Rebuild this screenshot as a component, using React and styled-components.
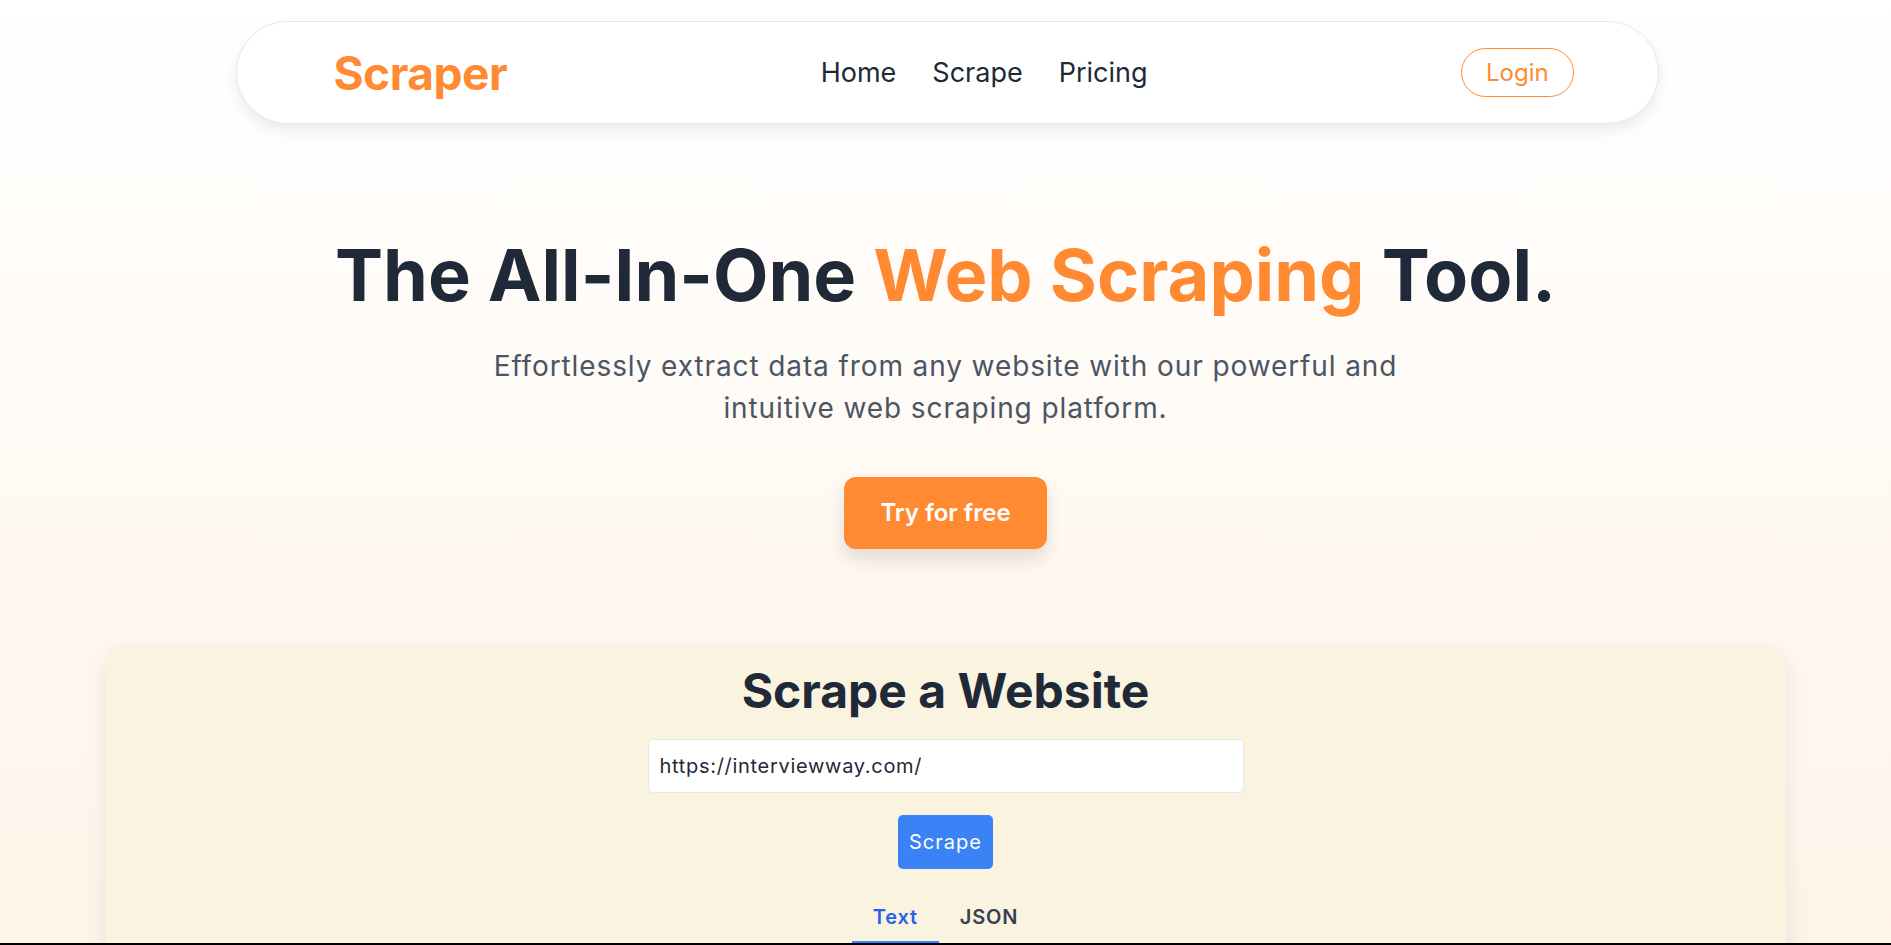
import React, { useState } from 'react';
import styled, { createGlobalStyle } from 'styled-components';

const GlobalStyle = createGlobalStyle`
    html, body {
        margin: 0;
        padding: 0;
    }
    body {
        font-family: Inter, 'Noto Sans', sans-serif;
        color: #1f2937;
        background: #fff;
    }
    * { box-sizing: border-box; }
`;

const Page = styled.div`
    min-height: 100vh;
    background: linear-gradient(to bottom, #ffffff 0%, #fff8f1 60%, #fff3e8 100%);
    padding-top: 21px;
    display: flex;
    flex-direction: column;
    align-items: center;
`;

const Navbar = styled.nav`
    width: calc(75% + 4px);
    margin-left: 4px;
    height: 103px;
    background: #fff;
    border: 1px solid #e5e7eb;
    border-radius: 52px;
    box-shadow: 0 6px 14px rgba(0, 0, 0, 0.08);
    display: flex;
    align-items: center;
    justify-content: space-between;
    padding: 0 84px 0 96px;
`;

const Logo = styled.a`
    font-size: 46px;
    font-weight: 700;
    color: #ff8a32;
    text-decoration: none;
    letter-spacing: -0.01em;
`;

const NavLinks = styled.div`
    display: flex;
    gap: 36px;
    margin-top: -1px;
`;

const NavLink = styled.a`
    font-size: 27px;
    color: #1f2937;
    text-decoration: none;
`;

const LoginButton = styled.button`
    font-family: inherit;
    font-size: 24px;
    line-height: 32px;
    color: #ff8a32;
    background: transparent;
    border: 1px solid #ff8a32;
    border-radius: 999px;
    padding: 7.5px 24px;
    cursor: pointer;
`;

const Hero = styled.section`
    display: flex;
    flex-direction: column;
    align-items: center;
    text-align: center;
    margin-top: 115px;
`;

const Title = styled.h1`
    margin: 0;
    font-size: 72px;
    line-height: 72px;
    font-weight: 700;
    color: #1f2937;
`;

const Accent = styled.span`
    color: #ff8a32;
`;

const Subtitle = styled.p`
    margin: 34px 0 0;
    max-width: 960px;
    font-size: 28px;
    line-height: 42px;
    letter-spacing: 0.032em;
    color: #4b5563;
`;

const CtaButton = styled.button`
    margin-top: 48px;
    font-family: inherit;
    font-size: 24px;
    line-height: 32px;
    font-weight: 600;
    color: #fff;
    background: #ff8a32;
    border: none;
    border-radius: 12px;
    padding: 20px 36px;
    box-shadow: 0 10px 18px rgba(0, 0, 0, 0.12);
    cursor: pointer;
`;

const Card = styled.section`
    width: 1680px;
    margin-top: 96px;
    background: #faf3df;
    border-radius: 16px;
    box-shadow: 0 10px 25px rgba(0, 0, 0, 0.08);
    padding: 16px 24px 40px;
    display: flex;
    flex-direction: column;
    align-items: center;
`;

const CardTitle = styled.h2`
    margin: 0;
    font-size: 48px;
    line-height: 60px;
    font-weight: 700;
    color: #1f2937;
`;

const UrlInput = styled.input`
    margin-top: 18px;
    width: 596px;
    height: 54px;
    font-family: inherit;
    font-size: 20px;
    letter-spacing: 0.035em;
    color: #1f2937;
    background: #fff;
    border: 1px solid #e5e7eb;
    border-radius: 5px;
    padding: 0 11px;
    outline: none;
`;

const ScrapeButton = styled.button`
    margin-top: 22px;
    height: 54px;
    font-family: inherit;
    font-size: 20px;
    line-height: 28px;
    letter-spacing: 0.05em;
    color: #fff;
    background: #3b82f6;
    border: none;
    border-radius: 5px;
    padding: 0 11px;
    cursor: pointer;
`;

const Tabs = styled.div`
    margin-top: 22px;
    display: flex;
`;

const Tab = styled.button`
    font-family: inherit;
    font-size: 20px;
    line-height: 28px;
    font-weight: 600;
    letter-spacing: 0.04em;
    background: transparent;
    border: none;
    border-bottom: 2px solid ${props => (props.$active ? '#3b82f6' : 'transparent')};
    color: ${props => (props.$active ? '#2563eb' : '#374151')};
    padding: 12px 21px 10px;
    cursor: pointer;
`;

const BottomEdge = styled.div`
    position: fixed;
    left: 0;
    right: 0;
    bottom: 0;
    height: 2px;
    background: #000;
`;

export default function App() {
    const [tab, setTab] = useState('text');
    const [url, setUrl] = useState('https://interviewway.com/');

    return (
        <>
            <GlobalStyle />
            <Page>
                <Navbar>
                    <Logo href="#">Scraper</Logo>
                    <NavLinks>
                        <NavLink href="#">Home</NavLink>
                        <NavLink href="#">Scrape</NavLink>
                        <NavLink href="#">Pricing</NavLink>
                    </NavLinks>
                    <LoginButton>Login</LoginButton>
                </Navbar>

                <Hero>
                    <Title>
                        The All-In-One <Accent>Web Scraping</Accent> Tool.
                    </Title>
                    <Subtitle>
                        Effortlessly extract data from any website with our powerful and intuitive web scraping platform.
                    </Subtitle>
                    <CtaButton>Try for free</CtaButton>
                </Hero>

                <Card>
                    <CardTitle>Scrape a Website</CardTitle>
                    <UrlInput value={url} onChange={e => setUrl(e.target.value)} />
                    <ScrapeButton>Scrape</ScrapeButton>
                    <Tabs>
                        <Tab $active={tab === 'text'} onClick={() => setTab('text')}>Text</Tab>
                        <Tab $active={tab === 'json'} onClick={() => setTab('json')}>JSON</Tab>
                    </Tabs>
                </Card>
            </Page>
            <BottomEdge />
        </>
    );
}
